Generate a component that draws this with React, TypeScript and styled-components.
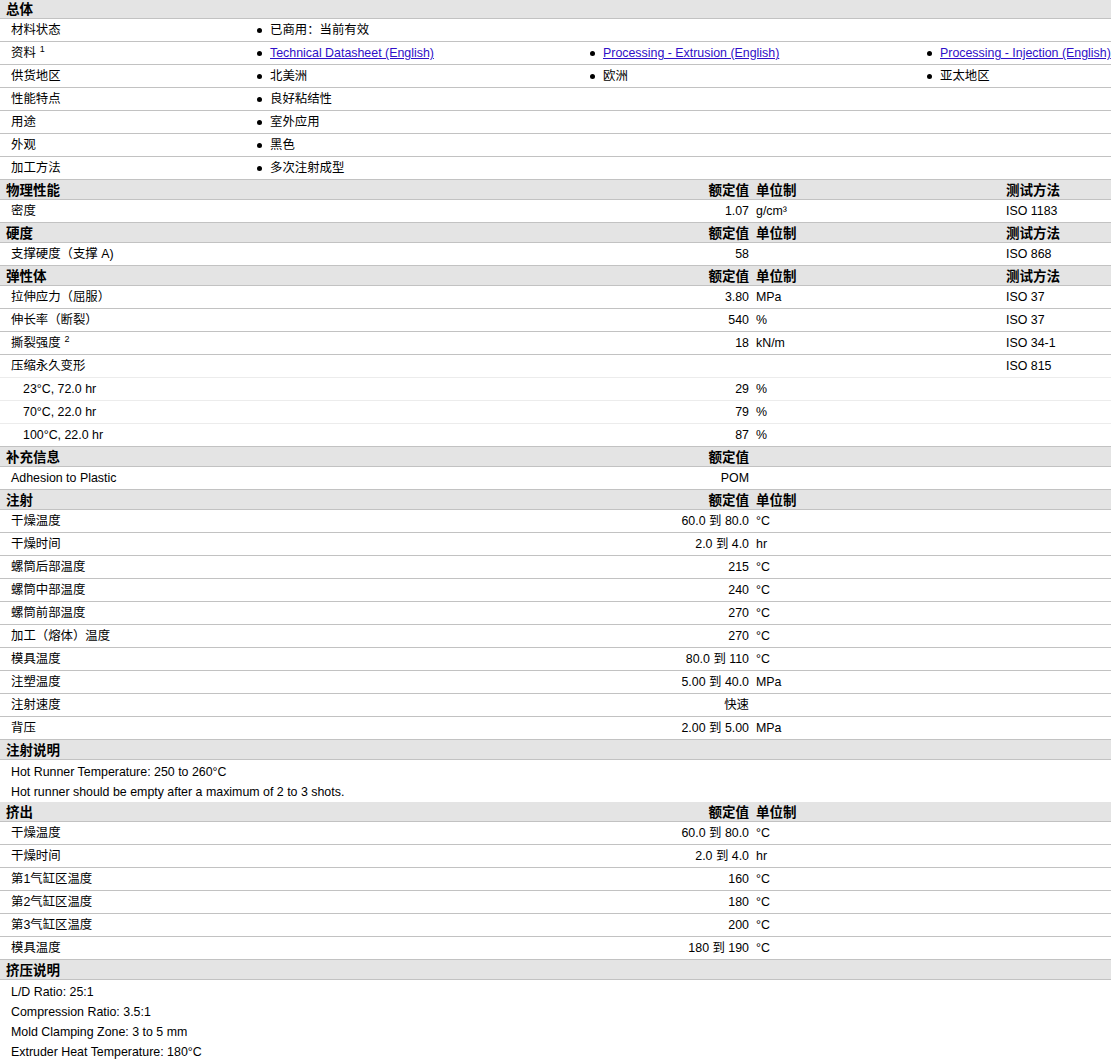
import React from "react";
import styled, { createGlobalStyle } from "styled-components";

const GlobalStyle = createGlobalStyle`
  html, body { margin: 0; padding: 0; background: #fff; }
  body {
    font-family: "Liberation Sans", Arial, "Noto Sans CJK SC", sans-serif;
    font-size: 12.4px;
    color: #000;
    overflow-x: hidden;
  }
`;

const Page = styled.div`
  width: 1111px;
  margin-top: -1px;
  overflow: hidden;
`;

const HeaderRow = styled.div`
  display: grid;
  grid-template-columns: 502px 250px 250px 1fr;
  height: 20px;
  box-sizing: border-box;
  background: #e4e4e4;
  border-bottom: 1px solid #c2c2c2;
  align-items: center;
  font-family: "Noto Sans CJK SC", sans-serif;
  font-weight: 700;
  font-size: 13.5px;
  line-height: 19px;
  white-space: nowrap;
`;

const HeaderTitle = styled.div`
  padding-left: 6px;
`;

const HeaderValue = styled.div`
  text-align: right;
  padding-right: 3px;
`;

const HeaderUnit = styled.div`
  padding-left: 4px;
`;

const DataRow = styled.div<{ $light?: boolean }>`
  display: grid;
  grid-template-columns: 502px 250px 250px 1fr;
  height: 23px;
  box-sizing: border-box;
  padding-top: 1px;
  border-bottom: 1px solid ${(p) => (p.$light ? "#ececec" : "#c2c2c2")};
  align-items: center;
  line-height: 21px;
  white-space: nowrap;
`;

const Label = styled.div<{ $indent?: number }>`
  padding-left: ${(p) => p.$indent ?? 11}px;
`;

const Value = styled.div`
  text-align: right;
  padding-right: 3px;
`;

const Unit = styled.div`
  padding-left: 4px;
`;

const Method = styled.div`
  padding-left: 4px;
`;

const Sup = styled.sup`
  font-family: "Liberation Sans", Arial, sans-serif;
  font-size: 9px;
  margin-left: 4px;
  line-height: 0;
  vertical-align: 5px;
`;

const BulletRow = styled.div`
  display: grid;
  grid-template-columns: 252px 333px 337px 1fr;
  height: 23px;
  box-sizing: border-box;
  padding-top: 1px;
  border-bottom: 1px solid #c2c2c2;
  align-items: center;
  line-height: 21px;
  white-space: nowrap;
`;

const BulletItem = styled.div`
  display: flex;
  align-items: center;
  gap: 8px;
  padding-left: 5px;
  &::before {
    content: "";
    width: 5px;
    height: 5px;
    border-radius: 50%;
    background: #000;
    flex: none;
  }
`;

const Link = styled.a`
  color: #2f10c8;
  text-decoration: underline;
  cursor: pointer;
`;

const Notes = styled.div`
  padding-top: 2px;
`;

const NoteLine = styled.div`
  line-height: 20px;
  padding-left: 11px;
  white-space: nowrap;
`;

type Row = {
  label: React.ReactNode;
  value?: React.ReactNode;
  unit?: string;
  method?: string;
  indent?: number;
  light?: boolean;
};

const Range = ({ a, b }: { a: string; b: string }) => (
  <>
    {a} 到 {b}
  </>
);

const Section = ({
  title,
  value = "额定值",
  unit = "单位制",
  method,
  rows,
}: {
  title: string;
  value?: string;
  unit?: string;
  method?: string;
  rows: Row[];
}) => (
  <>
    <HeaderRow>
      <HeaderTitle>{title}</HeaderTitle>
      <HeaderValue>{value}</HeaderValue>
      <HeaderUnit>{unit}</HeaderUnit>
      <HeaderUnit>{method}</HeaderUnit>
    </HeaderRow>
    {rows.map((r, i) => (
      <DataRow key={i} $light={r.light}>
        <Label $indent={r.indent}>{r.label}</Label>
        <Value>{r.value}</Value>
        <Unit>{r.unit}</Unit>
        <Method>{r.method}</Method>
      </DataRow>
    ))}
  </>
);

const general: { label: React.ReactNode; items: React.ReactNode[] }[] = [
  { label: "材料状态", items: ["已商用：当前有效"] },
  {
    label: (
      <>
        资料<Sup>1</Sup>
      </>
    ),
    items: [
      <Link>Technical Datasheet (English)</Link>,
      <Link>Processing - Extrusion (English)</Link>,
      <Link>Processing - Injection (English)</Link>,
    ],
  },
  { label: "供货地区", items: ["北美洲", "欧洲", "亚太地区"] },
  { label: "性能特点", items: ["良好粘结性"] },
  { label: "用途", items: ["室外应用"] },
  { label: "外观", items: ["黑色"] },
  { label: "加工方法", items: ["多次注射成型"] },
];

export default function App() {
  return (
    <>
      <GlobalStyle />
      <Page>
        <HeaderRow>
          <HeaderTitle>总体</HeaderTitle>
        </HeaderRow>
        {general.map((g, i) => (
          <BulletRow key={i}>
            <Label>{g.label}</Label>
            {g.items.map((it, j) => (
              <BulletItem key={j}>{it}</BulletItem>
            ))}
          </BulletRow>
        ))}

        <Section
          title="物理性能"
          method="测试方法"
          rows={[{ label: "密度", value: "1.07", unit: "g/cm³", method: "ISO 1183" }]}
        />
        <Section
          title="硬度"
          method="测试方法"
          rows={[{ label: "支撑硬度（支撑 A)", value: "58", method: "ISO 868" }]}
        />
        <Section
          title="弹性体"
          method="测试方法"
          rows={[
            { label: "拉伸应力（屈服）", value: "3.80", unit: "MPa", method: "ISO 37" },
            { label: "伸长率（断裂）", value: "540", unit: "%", method: "ISO 37" },
            {
              label: (
                <>
                  撕裂强度<Sup>2</Sup>
                </>
              ),
              value: "18",
              unit: "kN/m",
              method: "ISO 34-1",
            },
            { label: "压缩永久变形", method: "ISO 815", light: true },
            { label: "23°C, 72.0 hr", value: "29", unit: "%", indent: 23, light: true },
            { label: "70°C, 22.0 hr", value: "79", unit: "%", indent: 23, light: true },
            { label: "100°C, 22.0 hr", value: "87", unit: "%", indent: 23 },
          ]}
        />
        <Section
          title="补充信息"
          unit=""
          rows={[{ label: "Adhesion to Plastic", value: "POM" }]}
        />
        <Section
          title="注射"
          rows={[
            { label: "干燥温度", value: <Range a="60.0" b="80.0" />, unit: "°C" },
            { label: "干燥时间", value: <Range a="2.0" b="4.0" />, unit: "hr" },
            { label: "螺筒后部温度", value: "215", unit: "°C" },
            { label: "螺筒中部温度", value: "240", unit: "°C" },
            { label: "螺筒前部温度", value: "270", unit: "°C" },
            { label: "加工（熔体）温度", value: "270", unit: "°C" },
            { label: "模具温度", value: <Range a="80.0" b="110" />, unit: "°C" },
            { label: "注塑温度", value: <Range a="5.00" b="40.0" />, unit: "MPa" },
            { label: "注射速度", value: "快速" },
            { label: "背压", value: <Range a="2.00" b="5.00" />, unit: "MPa" },
          ]}
        />
        <HeaderRow>
          <HeaderTitle>注射说明</HeaderTitle>
        </HeaderRow>
        <Notes>
          <NoteLine>Hot Runner Temperature: 250 to 260°C</NoteLine>
          <NoteLine>Hot runner should be empty after a maximum of 2 to 3 shots.</NoteLine>
        </Notes>
        <Section
          title="挤出"
          rows={[
            { label: "干燥温度", value: <Range a="60.0" b="80.0" />, unit: "°C" },
            { label: "干燥时间", value: <Range a="2.0" b="4.0" />, unit: "hr" },
            { label: "第1气缸区温度", value: "160", unit: "°C" },
            { label: "第2气缸区温度", value: "180", unit: "°C" },
            { label: "第3气缸区温度", value: "200", unit: "°C" },
            { label: "模具温度", value: <Range a="180" b="190" />, unit: "°C" },
          ]}
        />
        <HeaderRow>
          <HeaderTitle>挤压说明</HeaderTitle>
        </HeaderRow>
        <Notes>
          <NoteLine>L/D Ratio: 25:1</NoteLine>
          <NoteLine>Compression Ratio: 3.5:1</NoteLine>
          <NoteLine>Mold Clamping Zone: 3 to 5 mm</NoteLine>
          <NoteLine>Extruder Heat Temperature: 180°C</NoteLine>
        </Notes>
      </Page>
    </>
  );
}
